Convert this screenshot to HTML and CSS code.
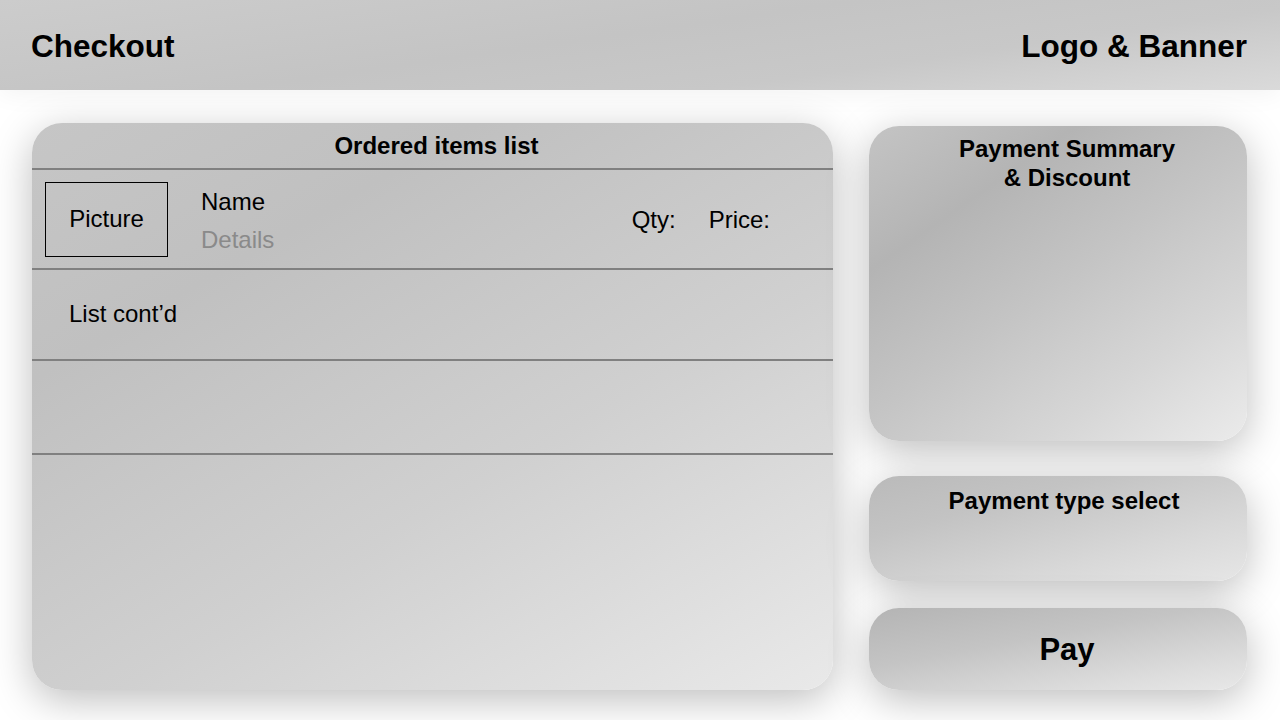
FILE: index.html
```html
<!DOCTYPE html>
<html>
<head>
<meta charset="utf-8">
<link rel="stylesheet" href="styles.css">
</head>
<body>
<header class="topbar">
  <h1 class="title">Checkout</h1>
  <div class="brand">Logo &amp; Banner</div>
</header>
<main class="content">
  <section class="card items">
    <div class="items-head">Ordered items list</div>
    <div class="row row-first">
      <div class="picture">Picture</div>
      <div class="info">
        <div class="name">Name</div>
        <div class="details">Details</div>
      </div>
      <div class="meta">
        <span>Qty:</span>
        <span>Price:</span>
      </div>
    </div>
    <div class="row row-cont">List cont’d</div>
    <div class="row row-empty"></div>
    <div class="rest"></div>
  </section>
  <aside class="side">
    <section class="card summary">Payment Summary<br>&amp; Discount</section>
    <section class="card ptype">Payment type select</section>
    <button class="card pay">Pay</button>
  </aside>
</main>
</body>
</html>
```

FILE: styles.css
```css
* { box-sizing: border-box; }
html, body { margin: 0; padding: 0; }
body {
  width: 1280px;
  height: 720px;
  overflow: hidden;
  background: #ffffff;
  font-family: "Liberation Sans", Arial, sans-serif;
  color: #000;
}
.topbar {
  position: relative;
  z-index: 1;
  height: 90px;
  display: flex;
  align-items: center;
  justify-content: space-between;
  padding: 0 33px 0 31px;
  background: linear-gradient(172deg, #cccccc 0%, #c4c4c4 45%, #c8c8c8 70%, #dadada 100%);
  box-shadow: 0 4px 24px rgba(0, 0, 0, 0.05);
}
.title, .brand {
  margin: 0;
  font-size: 31.5px;
  font-weight: bold;
  line-height: 36px;
  margin-top: 2px;
}
.content {
  display: flex;
  align-items: flex-start;
  gap: 36px;
  padding: 33px 33px 0 32px;
}
.card {
  border-radius: 30px;
  box-shadow: 0 10px 40px rgba(0, 0, 0, 0.26);
}
.items {
  width: 801px;
  height: 567px;
  display: flex;
  flex-direction: column;
  overflow: hidden;
  background: linear-gradient(150deg, #c6c6c6 0%, #c0c0c0 25%, #d0d0d0 60%, #e9e9e9 100%);
}
.items-head {
  height: 47px;
  border-bottom: 2px solid #808080;
  padding-left: 8px;
  text-align: center;
  font-size: 24px;
  font-weight: bold;
  line-height: 46px;
}
.row {
  border-bottom: 2px solid #808080;
  display: flex;
  align-items: center;
  font-size: 24px;
}
.row-first {
  height: 100px;
  padding: 2px 63px 0 13px;
}
.picture {
  width: 123px;
  height: 75px;
  border: 1px solid #000;
  display: flex;
  align-items: center;
  justify-content: center;
  margin-top: -2px;
}
.info {
  margin-left: 33px;
  line-height: 38px;
  margin-top: 1px;
}
.details { color: #8a8a8a; }
.meta {
  margin-left: auto;
  display: flex;
  gap: 33px;
}
.row-cont {
  height: 91px;
  padding-left: 37px;
  padding-bottom: 2px;
}
.row-empty { height: 94px; }
.rest { flex: 1; }
.side {
  width: 378px;
  margin-top: 3px;
  display: flex;
  flex-direction: column;
}
.summary {
  height: 315px;
  padding: 8px 0 0 18px;
  text-align: center;
  font-size: 24px;
  font-weight: bold;
  line-height: 29px;
  background: linear-gradient(145deg, #c4c4c4 0%, #b4b4b4 25%, #c4c4c4 50%, #d6d6d6 75%, #ebebeb 100%);
}
.ptype {
  height: 105px;
  margin-top: 35px;
  padding: 10px 0 0 12px;
  text-align: center;
  font-size: 24px;
  font-weight: bold;
  line-height: 29px;
  background: linear-gradient(165deg, #bababa 0%, #c3c3c3 30%, #d8d8d8 70%, #e6e6e6 100%);
}
.pay {
  height: 82px;
  margin-top: 27px;
  border: none;
  font-family: inherit;
  font-size: 31px;
  font-weight: bold;
  color: #000;
  padding: 2px 0 0 18px;
  background: linear-gradient(170deg, #b4b4b4 0%, #c4c4c4 40%, #dddddd 80%, #e8e8e8 100%);
}
```
